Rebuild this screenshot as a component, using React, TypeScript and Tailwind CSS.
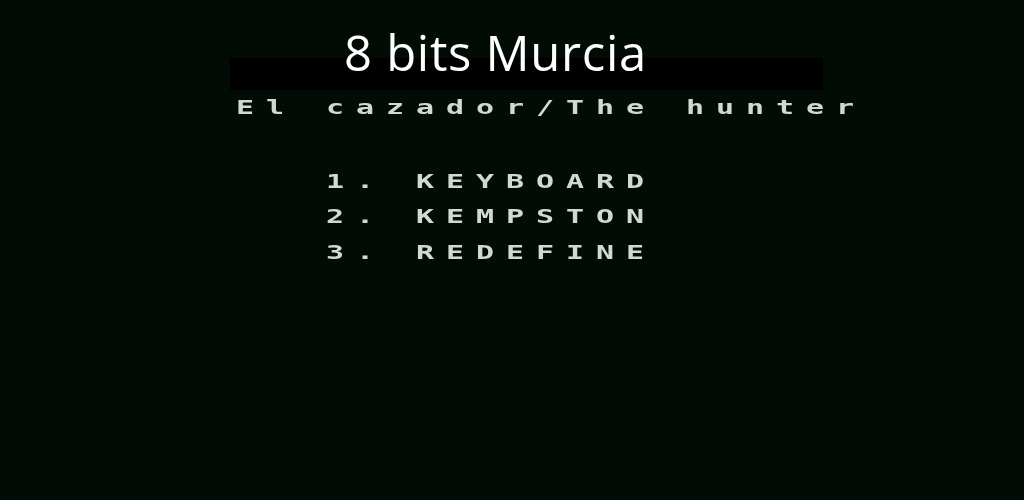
const menu = ['1. KEYBOARD', '2. KEMPSTON', '3. REDEFINE'];

function PixelLine({ text, indent }: { text: string; indent: string }) {
  return (
    <div className={`${indent} h-[35.5px] leading-[35px] whitespace-pre`}>
      <span className="inline-block origin-left scale-x-[1.5] font-['DejaVu_Sans_Mono',monospace] text-[20px] font-bold tracking-[7.96px] text-[#d2d8d2] blur-[0.4px]">
        {text}
      </span>
    </div>
  );
}

export default function App() {
  return (
    <div className="relative h-[500px] w-full overflow-hidden bg-[#020b04]">
      {/* Speccy screen */}
      <div className="pt-[58px]">
        <div className="ml-[230px] h-[32px] w-[593px] bg-black" />
        <PixelLine text="El cazador/The hunter" indent="ml-[236px]" />
        <div className="mt-[38px]">
          {menu.map((m) => (
            <PixelLine key={m} text={m} indent="ml-[326px]" />
          ))}
        </div>
      </div>

      {/* Title overlay */}
      <h1 className="absolute left-[344px] top-[28px] font-['Open_Sans',sans-serif] text-[49px] leading-none font-normal tracking-[0.7px] text-white">
        8 bits Murcia
      </h1>
    </div>
  );
}
